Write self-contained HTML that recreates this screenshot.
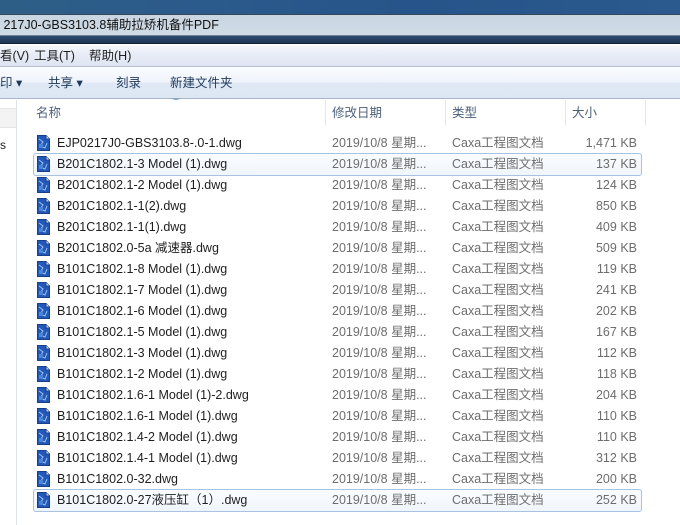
<!DOCTYPE html>
<html><head><meta charset="utf-8"><style>
*{margin:0;padding:0;box-sizing:border-box}
body{width:680px;height:525px;overflow:hidden;background:#fff;font-family:"Liberation Sans","Noto Sans CJK SC",sans-serif;font-size:12.5px;color:#1e1e1e;position:relative}
.abs{position:absolute}
.desk{left:0;top:0;width:680px;height:14px;background:linear-gradient(90deg,#2d5f86,#2b5a8c 30%,#27548a 60%,#2a5a8e)}
.title{left:0;top:14px;width:680px;height:22px;background:linear-gradient(#c9d6e2,#cfdbe5);border-top:1px solid #39475a;border-bottom:1px solid #6f8498;font-size:12.5px;line-height:20px;color:#101010}
.dark{left:0;top:36px;width:680px;height:8px;background:linear-gradient(#2c4a6e,#1f3554);border-bottom:1px solid #10203a}
.menu{left:0;top:45px;width:680px;height:22px;background:linear-gradient(#f6f8fc 0%,#e9edf7 40%,#dfe4f2 100%);border-bottom:1px solid #b6bfd0;font-size:12.5px;line-height:22px}
.tool{left:0;top:67px;width:680px;height:32px;background:linear-gradient(#fbfcfe 0%,#eef3fa 50%,#dfe8f4 51%,#dde7f3 100%);border-bottom:1px solid #a9b6c9;font-size:12.5px;line-height:32px;color:#1e395b}
.hdr{left:17px;top:100px;width:663px;height:26px;background:#fff;color:#4c607a;font-size:12.5px;line-height:26px}
.sep{top:100px;width:1px;height:26px;background:#e3e8ef}
.left{left:0;top:100px;width:17px;height:425px;border-right:1px solid #dde3ea;background:#fff}
.row{position:absolute;left:33px;width:609px;height:21px;line-height:21px}
.sel{box-shadow:inset 0 0 0 1px #a7c2e3;border-radius:3px;background:linear-gradient(#fbfdff,#f0f5fc)}
.ic{position:absolute;left:4px;top:2px;width:13px;height:16px}
.n{position:absolute;left:24px;top:0;white-space:nowrap}
.d{position:absolute;left:299px;color:#6d6d6d;white-space:nowrap}
.t{position:absolute;left:419px;color:#6d6d6d;white-space:nowrap}
.s{position:absolute;right:5px;color:#6d6d6d;white-space:nowrap}
</style></head><body>
<div class="abs desk"></div>
<div class="abs title">&nbsp;217J0-GBS3103.8辅助拉矫机备件PDF</div>
<div class="abs dark"></div>
<div class="abs menu"><span class="abs" style="left:0">看(V)</span><span class="abs" style="left:34px">工具(T)</span><span class="abs" style="left:89px">帮助(H)</span></div>
<div class="abs tool"><span class="abs" style="left:0">印 ▾</span><span class="abs" style="left:48px">共享 ▾</span><span class="abs" style="left:116px">刻录</span><span class="abs" style="left:170px">新建文件夹</span></div>
<div class="abs" style="left:172px;top:98px;width:0;height:0;border-left:4px solid transparent;border-right:4px solid transparent;border-top:4px solid #8ea8c6"></div>
<div class="abs left"><div style="margin-top:8px;height:20px;border-top:1px solid #e6e6e6;border-bottom:1px solid #e6e6e6;background:#f3f3f3"></div><div style="margin-top:10px;font-size:12px">s</div></div>
<div class="abs hdr"><span class="abs" style="left:19px">名称</span><span class="abs" style="left:315px">修改日期</span><span class="abs" style="left:435px">类型</span><span class="abs" style="left:555px">大小</span></div>
<div class="abs sep" style="left:325px"></div><div class="abs sep" style="left:445px"></div><div class="abs sep" style="left:565px"></div><div class="abs sep" style="left:645px"></div>
<svg width="0" height="0" style="position:absolute"><defs><symbol id="f" viewBox="0 0 13 16"><path d="M0.5 0.5H9L12.5 4V15.5H0.5Z" fill="#2458b8" stroke="#1a3f8a"/><path d="M9 0.5V4H12.5" fill="#cfe0f5" stroke="#1a3f8a"/><path d="M2 4L6 7L3 11L8 13L10 8" stroke="#9cc3f0" fill="none"/><rect x="2" y="9" width="4" height="4" fill="#4a86d8"/></symbol></defs></svg>
<div id="rows"></div>
<script>
var r=[["EJP0217J0-GBS3103.8-.0-1.dwg","1,471 KB"],["B201C1802.1-3 Model (1).dwg","137 KB"],["B201C1802.1-2 Model (1).dwg","124 KB"],["B201C1802.1-1(2).dwg","850 KB"],["B201C1802.1-1(1).dwg","409 KB"],["B201C1802.0-5a 减速器.dwg","509 KB"],["B101C1802.1-8 Model (1).dwg","119 KB"],["B101C1802.1-7 Model (1).dwg","241 KB"],["B101C1802.1-6 Model (1).dwg","202 KB"],["B101C1802.1-5 Model (1).dwg","167 KB"],["B101C1802.1-3 Model (1).dwg","112 KB"],["B101C1802.1-2 Model (1).dwg","118 KB"],["B101C1802.1.6-1 Model (1)-2.dwg","204 KB"],["B101C1802.1.6-1 Model (1).dwg","110 KB"],["B101C1802.1.4-2 Model (1).dwg","110 KB"],["B101C1802.1.4-1 Model (1).dwg","312 KB"],["B101C1802.0-32.dwg","200 KB"],["B101C1802.0-27液压缸（1）.dwg","252 KB"]];
var h="";
r.forEach(function(x,i){var y=133+i*21;var c=(i==1||i==17)?" sel":"";
h+='<div class="row'+c+'" style="top:'+(y-(c?1:0))+'px'+(c?';height:23px;line-height:23px':'')+'"><svg class="ic"'+(c?' style="top:3px"':'')+'><use href="#f"/></svg><span class="n">'+x[0]+'</span><span class="d">2019/10/8 星期...</span><span class="t">Caxa工程图文档</span><span class="s">'+x[1]+'</span></div>';});
document.getElementById("rows").innerHTML=h;
</script>
</body></html>
